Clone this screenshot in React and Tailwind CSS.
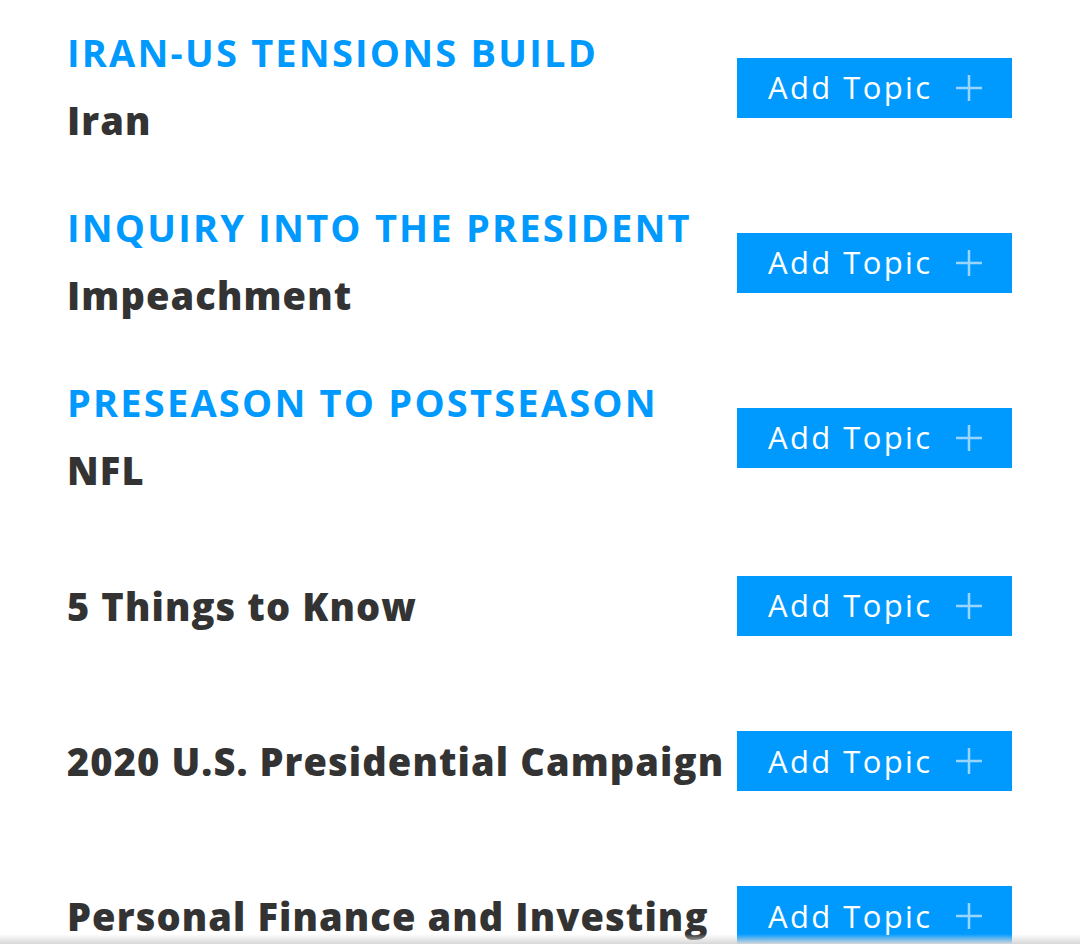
const topics = [
  { kicker: 'IRAN-US TENSIONS BUILD', name: 'Iran', h: 'h-[175px]' },
  { kicker: 'INQUIRY INTO THE PRESIDENT', name: 'Impeachment', h: 'h-[175px]' },
  { kicker: 'PRESEASON TO POSTSEASON', name: 'NFL', h: 'h-[175px]' },
  { name: '5 Things to Know', h: 'h-[161px]' },
  { name: '2020 U.S. Presidential Campaign', h: 'h-[150px]' },
  { name: 'Personal Finance and Investing', h: 'h-[160px]' },
];

function PlusIcon() {
  return (
    <svg width="28" height="28" viewBox="0 0 28 28" className="opacity-60 shrink-0">
      <path d="M14 1v26M1 14h26" stroke="white" strokeWidth="2.5" fill="none" />
    </svg>
  );
}

export default function App() {
  return (
    <div className="relative h-[944px] w-[1080px] overflow-hidden bg-white font-['Open_Sans',sans-serif]">
      <ul className="pl-[67px]">
        {topics.map((t) => (
          <li key={t.name} className={`flex items-center ${t.h}`}>
            <div className="w-[670px] shrink-0">
              {t.kicker && (
                <div className="text-[38px] font-bold leading-[64px] tracking-[2.2px] text-[#009aff] whitespace-nowrap -mt-[4px] mb-[4px]">
                  {t.kicker}
                </div>
              )}
              <div className="text-[38px] font-extrabold leading-[64px] tracking-[1.1px] text-[#333333] whitespace-nowrap">
                {t.name}
              </div>
            </div>
            <button className="flex h-[60px] w-[275px] items-center gap-[22px] bg-[#009aff] pl-[31px] text-[31px] tracking-[2.4px] text-white">
              <span>Add Topic</span>
              <PlusIcon />
            </button>
          </li>
        ))}
      </ul>
      <div className="pointer-events-none absolute bottom-0 left-0 h-[10px] w-full bg-gradient-to-b from-white/0 to-[#d8d8d8]" />
    </div>
  );
}
